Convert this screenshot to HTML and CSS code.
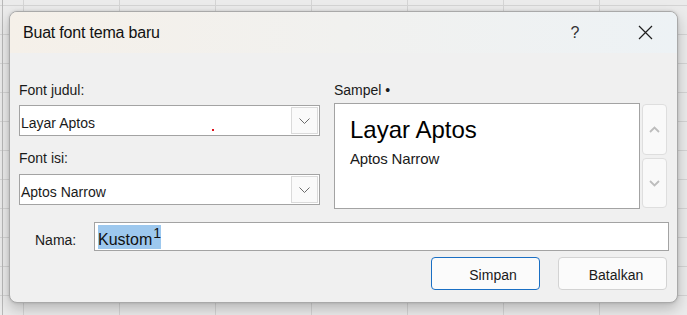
FILE: index.html
```html
<!DOCTYPE html>
<html lang="id">
<head>
  <meta charset="UTF-8">
  <title>Buat font tema baru</title>
  <link rel="stylesheet" href="styles.css">
</head>
<body>
  <div class="dialog">
    <div class="titlebar">
      <span class="title">Buat font tema baru</span>
      <span class="help">?</span>
      <span class="close">
        <svg width="15" height="15" viewBox="0 0 15 15"><path d="M1 1L14 14M14 1L1 14" stroke="#1f1f1f" stroke-width="1.2" fill="none"/></svg>
      </span>
    </div>

    <div class="content">
      <div class="fonts">
        <div class="col-left">
          <div class="field-label">Font judul:</div>
          <div class="combo">
            <span class="combo-value">Layar Aptos</span>
            <span class="red-dot"></span>
            <span class="combo-arrow">
              <svg width="11" height="6" viewBox="0 0 11 6"><path d="M0.5 0.5L5.5 5.5L10.5 0.5" stroke="#6b6b6b" stroke-width="1" fill="none"/></svg>
            </span>
          </div>
          <div class="field-label second">Font isi:</div>
          <div class="combo">
            <span class="combo-value">Aptos Narrow</span>
            <span class="combo-arrow">
              <svg width="11" height="6" viewBox="0 0 11 6"><path d="M0.5 0.5L5.5 5.5L10.5 0.5" stroke="#6b6b6b" stroke-width="1" fill="none"/></svg>
            </span>
          </div>
        </div>

        <div class="col-right">
          <div class="field-label sample-label">Sampel &bull;</div>
          <div class="sample-wrap">
            <div class="sample">
              <div class="sample-heading">Layar Aptos</div>
              <div class="sample-body">Aptos Narrow</div>
            </div>
            <div class="spin">
              <span class="spin-btn up">
                <svg width="11" height="7" viewBox="0 0 11 7"><path d="M1 6L5.5 1.5L10 6" stroke="#bdbdbd" stroke-width="1.8" fill="none"/></svg>
              </span>
              <span class="spin-btn down">
                <svg width="11" height="7" viewBox="0 0 11 7"><path d="M1 1L5.5 5.5L10 1" stroke="#bdbdbd" stroke-width="1.8" fill="none"/></svg>
              </span>
            </div>
          </div>
        </div>
      </div>

      <div class="name-row">
        <span class="name-label">Nama:</span>
        <div class="name-input"><span class="sel">Kustom<span class="sup">1</span></span></div>
      </div>

      <div class="actions">
        <span class="btn primary">Simpan</span>
        <span class="btn cancel">Batalkan</span>
      </div>
    </div>
  </div>
</body>
</html>
```

FILE: styles.css
```css
body {
  margin: 0;
  width: 687px;
  height: 315px;
  overflow: hidden;
  font-family: "Liberation Sans", Arial, sans-serif;
  color: #1a1a1a;
  background-color: #ebebeb;
  background-image:
    linear-gradient(90deg, transparent 2px, #b8b8b8 2px, #b8b8b8 3px, transparent 3px),
    linear-gradient(#d4d4d4 1px, transparent 1px),
    linear-gradient(90deg, #d4d4d4 1px, transparent 1px);
  background-size: 100% 100%, 96px 29px, 96px 29px;
  background-position: 0 0, 23px 5px, 23px 5px;
  background-repeat: no-repeat, repeat, repeat;
}

.dialog {
  box-sizing: border-box;
  margin: 11px 0 0 9px;
  width: 669px;
  height: 292px;
  border: 1px solid #a9a9a9;
  border-radius: 8px;
  background: #f0f0f0;
  overflow: hidden;
  box-shadow: 0 6px 14px rgba(0, 0, 0, 0.22), 0 0 3px rgba(0, 0, 0, 0.15);
}

.titlebar {
  height: 41px;
  display: flex;
  align-items: center;
  padding: 0 9px 0 13px;
  background: linear-gradient(90deg, #f5f0e9 0%, #f1f1ef 50%, #edf2f5 100%);
}
.title {
  flex: 1;
  font-size: 16px;
  letter-spacing: -0.2px;
  color: #111;
}
.help {
  width: 46px;
  text-align: center;
  font-size: 16px;
  color: #333;
}
.close {
  width: 46px;
  margin-left: 24px;
  display: flex;
  justify-content: center;
}

.content {
  padding: 29px 10px 12px 9px;
}

.fonts {
  display: flex;
  gap: 14px;
  height: 127px;
}
.col-left {
  width: 301px;
}
.field-label {
  font-size: 14px;
  line-height: 16px;
  height: 16px;
  margin-bottom: 7px;
}
.field-label.second {
  margin-top: 14px;
  margin-bottom: 8px;
}
.field-label.sample-label {
  margin-bottom: 5px;
}

.combo {
  position: relative;
  box-sizing: border-box;
  height: 31px;
  display: flex;
  border: 1px solid #a3a3a3;
  background: #fff;
}
.combo-value {
  flex: 1;
  padding: 9px 0 0 1px;
  font-size: 14px;
  line-height: 16px;
}
.combo-arrow {
  box-sizing: border-box;
  width: 27px;
  margin: 1px 1px 1px 0;
  border: 1px solid #dadada;
  background: #fafafa;
  display: flex;
  align-items: center;
  justify-content: center;
}
.red-dot {
  position: absolute;
  left: 192px;
  top: 23px;
  width: 2px;
  height: 2px;
  background: #e0101a;
}

.sample-wrap {
  display: flex;
  gap: 2px;
}
.sample {
  box-sizing: border-box;
  width: 306px;
  height: 106px;
  border: 1px solid #a3a3a3;
  background: #fff;
  padding: 12px 0 0 15px;
}
.sample-heading {
  font-size: 24px;
  line-height: 28px;
  color: #000;
}
.sample-body {
  margin-top: 6px;
  font-size: 15px;
  line-height: 18px;
  letter-spacing: -0.15px;
}
.spin {
  width: 25px;
  display: flex;
  flex-direction: column;
  gap: 3px;
  padding-top: 1px;
}
.spin-btn {
  box-sizing: border-box;
  height: 51px;
  border: 1px solid #dedede;
  border-radius: 4px;
  background: #f9f9f9;
  display: flex;
  align-items: center;
  justify-content: center;
}
.spin-btn.down {
  height: 50px;
}

.name-row {
  display: flex;
  align-items: baseline;
  margin-top: 13px;
  margin-right: -2px;
  padding-left: 16px;
}
.name-label {
  width: 59px;
  font-size: 14px;
}
.name-input {
  flex: 1;
  box-sizing: border-box;
  height: 29px;
  border: 1px solid #a3a3a3;
  background: #fff;
  padding: 2px 3px 0;
}
.sel {
  display: inline-block;
  padding-top: 6px;
  font-size: 16px;
  line-height: 17px;
  background: #9dc8ee;
  color: #111;
}
.sup {
  font-size: 14px;
  position: relative;
  top: -7px;
  margin-left: 1px;
}

.actions {
  display: flex;
  justify-content: flex-end;
  gap: 18px;
  margin-top: 6px;
}
.btn {
  box-sizing: border-box;
  width: 109px;
  height: 33px;
  border: 1px solid #d3d3d3;
  border-radius: 4px;
  background: #fbfbfb;
  font-size: 14px;
  display: flex;
  align-items: center;
  justify-content: center;
  padding-top: 2px;
}
.btn.primary {
  border-color: #1a6fc4;
  padding-left: 15px;
}
.btn.cancel {
  padding-left: 7px;
}
```
